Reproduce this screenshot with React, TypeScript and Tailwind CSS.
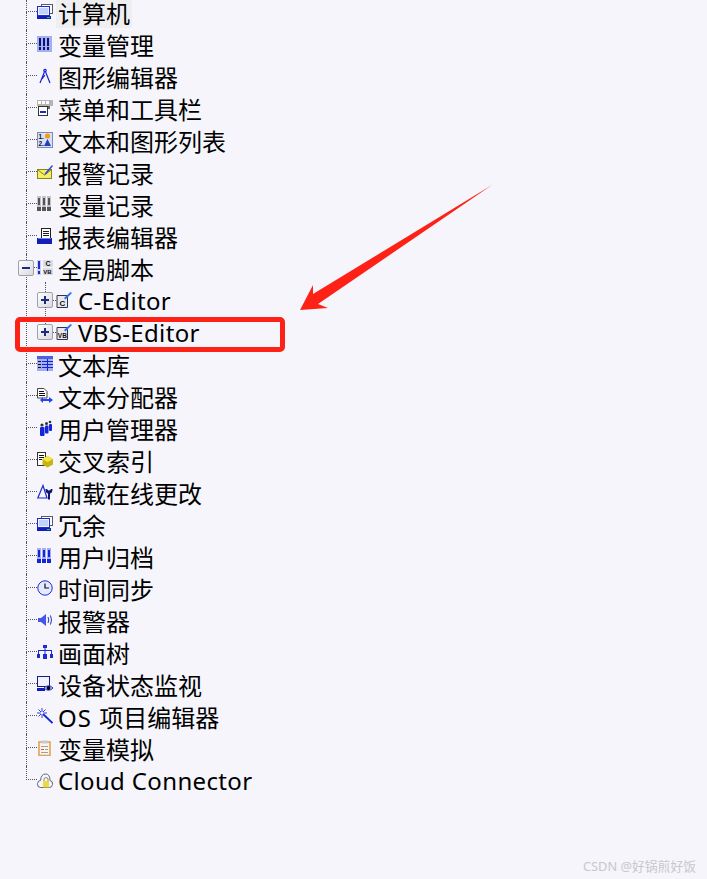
import React from 'react';

const FONT = "font-['Noto_Sans','Noto_Sans_CJK_SC',sans-serif]";

// 16x16 tree icons, roughly the old WinCC explorer bitmaps
const Computer = () => (
  <>
    <rect x="4.5" y="0.5" width="11" height="9" fill="#fff" stroke="#555a70" />
    <rect x="0.5" y="2.5" width="12" height="9" fill="#eef4ff" stroke="#1d2bd0" />
    <rect x="2" y="4" width="9" height="6" fill="#c2d2f8" />
    <rect x="0" y="12" width="14" height="3" fill="#111fb8" />
    <rect x="10" y="13" width="3" height="1" fill="#22c55e" />
  </>
);

const Tags = () => (
  <>
    <rect x="0" y="0" width="15" height="16" fill="#a4aff2" />
    <rect x="2" y="2" width="2" height="8" fill="#0c1470" />
    <rect x="6" y="2" width="2" height="8" fill="#0c1470" />
    <rect x="10" y="2" width="2" height="8" fill="#0c1470" />
    <rect x="2" y="11" width="2" height="3" fill="#0c1470" />
    <rect x="6" y="11" width="2" height="3" fill="#0c1470" />
    <rect x="10" y="11" width="2" height="3" fill="#0c1470" />
  </>
);

const Compass = () => (
  <g fill="none" stroke="#1424d8" strokeWidth="1.2">
    <circle cx="8" cy="2.5" r="1.2" />
    <path d="M7.4 4 L3 15 M8.6 4 L13 15 M5 11 L8 7" />
  </g>
);

const Menu = () => (
  <>
    <rect x="0" y="0" width="16" height="6" fill="#b4b4b4" />
    <rect x="1" y="1" width="3" height="3" fill="#fff" />
    <rect x="5" y="1" width="3" height="3" fill="#fff" />
    <rect x="9" y="1" width="3" height="3" fill="#fff" />
    <rect x="1.5" y="6.5" width="9" height="9" fill="#fff" stroke="#333" />
    <rect x="3" y="11" width="6" height="2" fill="#1424d8" />
    <rect x="11" y="6" width="2" height="3" fill="#666" />
  </>
);

const TextGraphic = () => (
  <>
    <rect x="0.5" y="0.5" width="15" height="15" fill="#d8e0fa" stroke="#7f8ab4" />
    <text x="1.5" y="7" fontSize="6.5" fontFamily="Liberation Sans" fontWeight="700" fill="#111">1.</text>
    <text x="1.5" y="14" fontSize="6.5" fontFamily="Liberation Sans" fontWeight="700" fill="#111">2.</text>
    <circle cx="10.5" cy="4" r="2.6" fill="#f59e0b" />
    <path d="M7 14 L10.5 7 L14 14 Z" fill="#1f3fb8" />
  </>
);

const AlarmLog = () => (
  <>
    <rect x="0.5" y="5.5" width="14" height="9" fill="#f5ef62" stroke="#86861a" />
    <path d="M1 6 L7.5 11 L14 6" fill="none" stroke="#86861a" />
    <path d="M8 9 L15 1 L16 2 L9.5 10 L7.5 11 Z" fill="#2f4be0" />
  </>
);

const Binders = ({ color, back }: { color: string; back: string }) => (
  <>
    <rect x="0" y="0" width="4" height="15" fill={back} />
    <rect x="5" y="0" width="4" height="15" fill={back} />
    <rect x="10" y="0" width="4" height="15" fill={back} />
    <rect x="1" y="2" width="2" height="7" fill={color} />
    <rect x="6" y="2" width="2" height="7" fill={color} />
    <rect x="11" y="2" width="2" height="7" fill={color} />
    <rect x="0" y="11" width="4" height="4" fill={color} />
    <rect x="5" y="11" width="4" height="4" fill={color} />
    <rect x="10" y="11" width="4" height="4" fill={color} />
  </>
);

const Report = () => (
  <>
    <rect x="4.5" y="0.5" width="9" height="10" fill="#fff" stroke="#222" />
    <rect x="6" y="3" width="6" height="1" fill="#222" />
    <rect x="6" y="5" width="6" height="1" fill="#222" />
    <rect x="6" y="7" width="6" height="1" fill="#222" />
    <rect x="0" y="10" width="15" height="6" fill="#111fb8" />
    <rect x="1" y="10" width="13" height="1" fill="#6d80f0" />
  </>
);

const Script = () => (
  <>
    <rect x="0" y="0" width="4" height="15" fill="#c8cff8" />
    <rect x="1" y="1" width="2" height="8" fill="#1d2bd0" />
    <rect x="1" y="11" width="2" height="3" fill="#1d2bd0" />
    <rect x="6" y="0" width="10" height="7" fill="#dcdce4" />
    <text x="8.5" y="6.2" fontSize="7" fontFamily="Liberation Sans" fontWeight="700" fill="#111">C</text>
    <rect x="6" y="8" width="10" height="7" fill="#dcdce4" />
    <text x="6.3" y="14.2" fontSize="6" fontFamily="Liberation Sans" fontWeight="700" fill="#111">VB</text>
  </>
);

const EditorDoc = ({ label }: { label: string }) => (
  <>
    <path d="M1 3.5 H11.5 V15.5 H1 Z" fill="#e8e8ee" stroke="#30344a" />
    <text x={label === 'C' ? 3.5 : 1.8} y="14" fontSize={label === 'C' ? 8 : 6.5} fontFamily="Liberation Sans" fontWeight="700" fill="#111">
      {label}
    </text>
    <path d="M8 6 L14.5 0 L16 1 L9.5 7.5 Z" fill="#2f6fe8" />
  </>
);

const TextLibrary = () => (
  <>
    <rect x="0" y="0" width="16" height="15" fill="#a4aff2" />
    <rect x="0" y="0" width="16" height="3" fill="#5060d8" />
    {[5, 8, 11].map((y) => (
      <React.Fragment key={y}>
        <rect x="1" y={y} width="3" height="1" fill="#111" />
        <rect x="5" y={y} width="11" height="1" fill="#1424d8" />
      </React.Fragment>
    ))}
    <rect x="10" y="3" width="1" height="12" fill="#1424d8" />
  </>
);

const TextDistributor = () => (
  <>
    <path d="M0.5 0.5 H7 L10 3.5 V10 H0.5 Z" fill="#fff" stroke="#444" />
    <rect x="2" y="3" width="5" height="1" fill="#111" />
    <rect x="2" y="5" width="6" height="1" fill="#111" />
    <rect x="2" y="7" width="6" height="1" fill="#111" />
    <path d="M3 12 L6 9 V11 H12 V9 L16 12 L12 15 V13 H6 V15 Z" fill="#1f44f0" />
  </>
);

const Users = () => (
  <>
    <circle cx="5" cy="5" r="1.6" fill="#333" />
    <circle cx="9.5" cy="3.5" r="1.5" fill="#333" />
    <circle cx="13" cy="2" r="1.3" fill="#333" />
    <rect x="3" y="7" width="4.5" height="9" rx="1" fill="#1424d8" />
    <rect x="8" y="5.5" width="3.5" height="8" rx="1" fill="#1424d8" />
    <rect x="12" y="4" width="3" height="7" rx="1" fill="#1424d8" />
  </>
);

const CrossRef = () => (
  <>
    <rect x="0.5" y="0.5" width="8" height="13" fill="#fff" stroke="#333" />
    <rect x="2" y="3" width="5" height="1" fill="#111" />
    <rect x="2" y="5" width="5" height="1" fill="#111" />
    <rect x="2" y="7" width="3" height="1" fill="#111" />
    <path d="M10.5 4 L16 7 V12.5 L10.5 15.5 L5.5 12.5 V7 Z" fill="#c8b410" />
    <path d="M5.5 7 L10.5 10 L16 7 L10.5 4 Z" fill="#f5e840" />
  </>
);

const LoadOnline = () => (
  <>
    <path d="M6 1.5 L0.8 14 H10 Z" fill="none" stroke="#1d2bd0" strokeWidth="1.2" />
    <path d="M10 5 Q12 8 14 5 L15.5 5 Q15.5 9 13 9.5 V15.5 H11 V9.5 Q8.5 9 8.5 5 Z" fill="#0c1470" />
  </>
);

const Clock = () => (
  <>
    <circle cx="8" cy="8" r="7.2" fill="#e4eaff" stroke="#1d2bd0" />
    <path d="M8 3.5 V8 H12" fill="none" stroke="#111" strokeWidth="1.2" />
  </>
);

const Horn = () => (
  <>
    <path d="M1 6 H4 L9 2 V14 L4 10 H1 Z" fill="#4458e8" />
    <path d="M11 5 Q12.5 8 11 11 M13.5 3.5 Q15.5 8 13.5 12.5" fill="none" stroke="#2233c8" />
  </>
);

const PictureTree = () => (
  <g fill="#1d2bd0">
    <rect x="6" y="1" width="4" height="3" />
    <rect x="1" y="6" width="14" height="1" />
    <rect x="7.5" y="4" width="1" height="6" />
    <rect x="1" y="7" width="1" height="3" />
    <rect x="14" y="7" width="1" height="3" />
    <rect x="0" y="10" width="3" height="4" />
    <rect x="6" y="10" width="4" height="5" />
    <rect x="13" y="10" width="3" height="4" />
  </g>
);

const DeviceMonitor = () => (
  <>
    <rect x="0.5" y="0.5" width="12" height="10" fill="#f0f3ff" stroke="#141c80" />
    <rect x="0" y="12" width="8" height="3" fill="#111fb8" />
    <path d="M7 12 Q11.5 7.5 16 12 Q11.5 16.5 7 12 Z" fill="#d8e0fa" stroke="#1d2bd0" />
    <circle cx="11.5" cy="12" r="2" fill="#000" />
  </>
);

const Wand = () => (
  <>
    <path d="M6 6 L15.5 15" stroke="#1424d8" strokeWidth="1.8" />
    <path d="M5 0 V10 M0 5 H10 M1.5 1.5 L8.5 8.5 M8.5 1.5 L1.5 8.5" stroke="#1d2bd0" strokeWidth="0.9" />
    <circle cx="5" cy="5" r="1.3" fill="#f5f5fb" />
  </>
);

const Clipboard = () => (
  <>
    <rect x="2" y="2" width="11" height="13.5" fill="#fdf6e8" stroke="#e2a45a" strokeWidth="1.6" />
    <rect x="4.5" y="0.5" width="6" height="3" fill="#c8c8d0" />
    <rect x="4" y="6" width="7" height="1" fill="#9aa0a8" />
    <rect x="4" y="9" width="3" height="1" fill="#d05050" />
    <rect x="8" y="9" width="3" height="1" fill="#9aa0a8" />
    <rect x="4" y="12" width="7" height="1" fill="#9aa0a8" />
  </>
);

const CloudLock = () => (
  <>
    <path d="M3.5 15.5 Q0 15.5 0.5 11.5 Q1 8.5 3.5 8.5 Q4 2 8.5 2 Q13 2 13 8.5 Q16 9 15.5 12.5 Q15 15.5 12.5 15.5 Z" fill="#f5f5fb" stroke="#5f6478" />
    <rect x="6" y="9" width="6" height="6.5" fill="#f0d93c" />
    <path d="M7 9 V6.5 Q9 4.5 11 6.5 V9" fill="none" stroke="#888" />
  </>
);

// shared dotted tree line segments, drawn in flow inside each row
const LINE = 'border-l border-dotted border-[#555]';

function Elbow({ last, first }: { last?: boolean; first?: boolean }) {
  return (
    <div className="flex h-full w-[11px] shrink-0 flex-col">
      <div className={`${first ? 'h-[12px]' : 'h-[14px]'} border-b border-dotted border-[#555] ${LINE}`} />
      {!last && <div className={`flex-1 ${LINE}`} />}
    </div>
  );
}

function Icon({ children, first }: { children: React.ReactNode; first?: boolean }) {
  return (
    <svg viewBox="0 0 16 16" className={`h-4 w-4 shrink-0 ${first ? 'mt-[4px] self-start' : '-mt-[4px]'}`}>
      {children}
    </svg>
  );
}

function Row({
  icon,
  label,
  last,
  first,
  latin,
}: {
  icon: React.ReactNode;
  label: React.ReactNode;
  last?: boolean;
  first?: boolean;
  latin?: boolean;
}) {
  return (
    <div className={`flex items-center ${first ? 'h-[30px]' : 'h-8'}`}>
      <Elbow last={last} first={first} />
      <Icon first={first}>{icon}</Icon>
      <span
        className={`text-[24px] text-black ${first ? 'ml-[3px] self-start bg-[#efeff1] px-[2px] leading-[28px]' : 'ml-[5px] leading-8'} ${latin ? '-mt-[2px] tracking-[0.35px]' : ''}`}
      >
        {label}
      </span>
    </div>
  );
}

function PlusBox({ minus }: { minus?: boolean }) {
  return (
    <div className="flex h-4 w-4 shrink-0 items-center justify-center rounded-[2px] border border-[#a0a0a8] bg-gradient-to-br from-white to-[#d8d8e0]">
      <div className="relative h-[2px] w-[8px] bg-[#1c2a80]">
        {!minus && <div className="absolute left-[3px] top-[-3px] h-[8px] w-[2px] bg-[#1c2a80]" />}
      </div>
    </div>
  );
}

function SubRow({ label, icon, stem }: { label: string; icon: React.ReactNode; stem: string }) {
  return (
    <div className="flex h-8 items-center">
      <div className={`h-full w-[11px] shrink-0 ${LINE}`} />
      <div className="relative -mt-[4px]">
        <div className={`absolute left-[8px] ${stem} ${LINE}`} />
        <PlusBox />
      </div>
      <div className="-mt-[4px] w-[3px] border-t border-dotted border-[#555]" />
      <Icon>{icon}</Icon>
      <span className="-mt-[2px] ml-[6px] text-[24px] leading-8 tracking-[0.35px] text-black">{label}</span>
    </div>
  );
}

function Annotations() {
  return (
    <>
      <div className="absolute left-[15px] top-[317px] h-[35px] w-[270px] rounded-[5px] border-[5px] border-[#fe2116]" />
      <svg className="absolute left-0 top-0 h-[400px] w-[707px]" viewBox="0 0 707 400">
        <path d="M492 185 L313 294 L313 285 L300 310 L328 308 L318 304 Z" fill="#fe2116" />
      </svg>
    </>
  );
}

export default function App() {
  return (
    <div className={`relative h-[879px] w-[707px] overflow-hidden bg-[#f5f5fb] ${FONT}`}>
      <div className="ml-[26px]">
        <Row icon={<Computer />} label="计算机" first />
        <Row icon={<Tags />} label="变量管理" />
        <Row icon={<Compass />} label="图形编辑器" />
        <Row icon={<Menu />} label="菜单和工具栏" />
        <Row icon={<TextGraphic />} label="文本和图形列表" />
        <Row icon={<AlarmLog />} label="报警记录" />
        <Row icon={<Binders color="#555" back="#c4c4cc" />} label="变量记录" />
        <Row icon={<Report />} label="报表编辑器" />
        <div className="relative">
          <Row icon={<Script />} label="全局脚本" />
          <div className="absolute left-[-8px] top-[6px]">
            <PlusBox minus />
          </div>
        </div>
        <SubRow label="C-Editor" icon={<EditorDoc label="C" />} stem="top-[-10px] h-[10px]" />
        <SubRow label="VBS-Editor" icon={<EditorDoc label="VB" />} stem="top-[-17px] h-[17px]" />
        <Row icon={<TextLibrary />} label="文本库" />
        <Row icon={<TextDistributor />} label="文本分配器" />
        <Row icon={<Users />} label="用户管理器" />
        <Row icon={<CrossRef />} label="交叉索引" />
        <Row icon={<LoadOnline />} label="加载在线更改" />
        <Row icon={<Computer />} label="冗余" />
        <Row icon={<Binders color="#1424d8" back="#a4aff2" />} label="用户归档" />
        <Row icon={<Clock />} label="时间同步" />
        <Row icon={<Horn />} label="报警器" />
        <Row icon={<PictureTree />} label="画面树" />
        <Row icon={<DeviceMonitor />} label="设备状态监视" />
        <Row
          icon={<Wand />}
          label={
            <>
              <span className="tracking-[1px]">OS </span>项目编辑器
            </>
          }
        />
        <Row icon={<Clipboard />} label="变量模拟" />
        <Row icon={<CloudLock />} label="Cloud Connector" last latin />
      </div>
      <Annotations />
      <div className="absolute bottom-[5px] right-[11px] text-[12.8px] leading-4 text-[#c8c8cc]">CSDN @好锅煎好饭</div>
    </div>
  );
}
